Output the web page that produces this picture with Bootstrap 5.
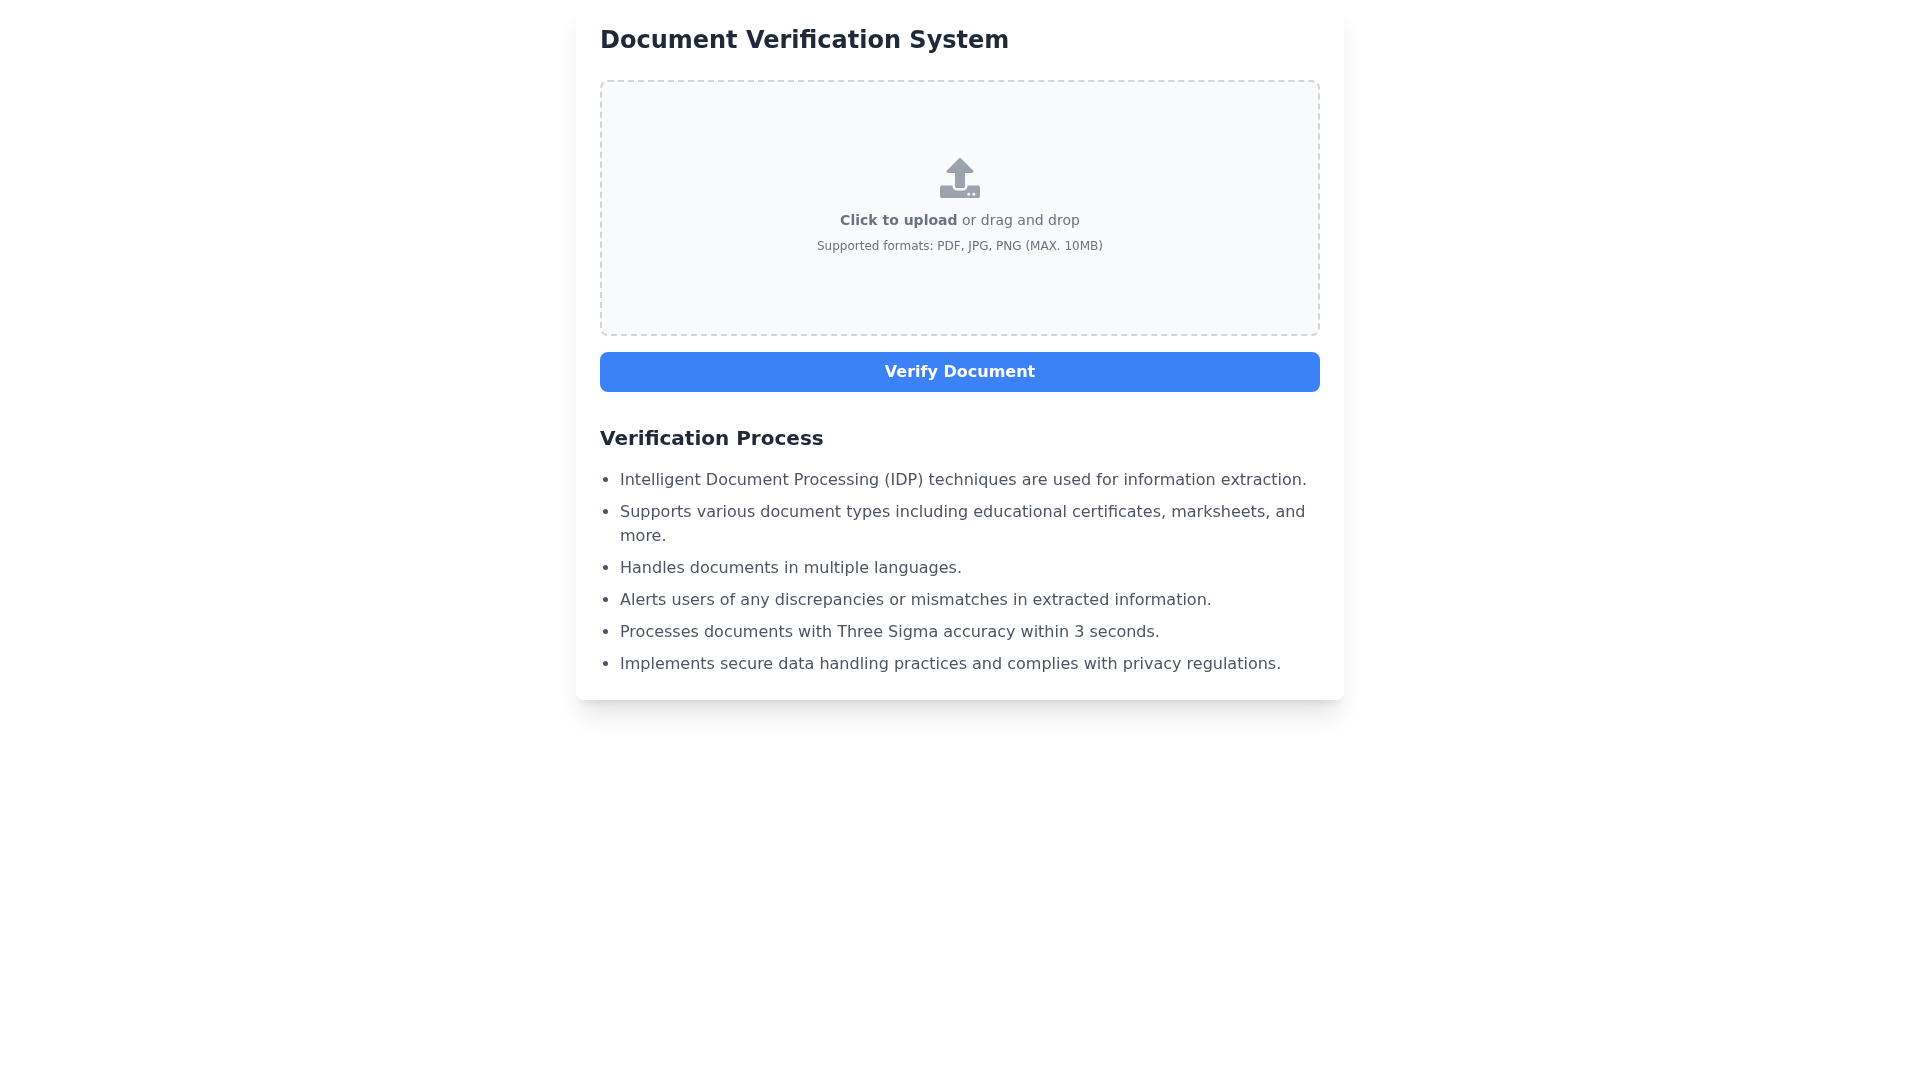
<!DOCTYPE html>
<html lang="en">
<head>
<meta charset="utf-8">
<title>Document Verification System</title>
<link href="https://cdn.jsdelivr.net/npm/bootstrap@5.3.0/dist/css/bootstrap.min.css" rel="stylesheet">
<style>
body { font-family: "DejaVu Sans", sans-serif; background: #fff; min-height: 100vh; }
.dv-card { width: 768px; min-height: 700px; border-radius: 8px; box-shadow: 0 20px 25px -5px rgba(0,0,0,.1), 0 8px 10px -6px rgba(0,0,0,.1); will-change: transform; }
.dv-title { font-size: 24px; line-height: 32px; font-weight: 700; color: #1f2937; margin-bottom: 24px; }
.dv-drop { height: 256px; background: #f9fafb; border: 2px dashed #d1d5db; border-radius: 8px; padding-bottom: 5px; }
.dv-icon { width: 40px; height: 40px; fill: #9ca3af; margin-bottom: 12px; }
.dv-main { font-size: 14px; line-height: 20px; color: #6b7280; margin-bottom: 8px; }
.dv-sub { font-size: 12px; line-height: 16px; color: #6b7280; }
.dv-btn { height: 40px; background: #3b82f6; border: 0; border-radius: 8px; color: #fff; font-size: 16px; font-weight: 700; margin-top: 16px; }
.dv-btn:hover { background: #3b82f6; color: #fff; }
.dv-h2 { font-size: 20px; line-height: 28px; font-weight: 700; color: #1f2937; margin-top: 32px; margin-bottom: 16px; }
.dv-list { padding-left: 20px; margin: 0; color: #4b5563; font-size: 16px; line-height: 24px; }
.dv-list li + li { margin-top: 8px; }
</style>
</head>
<body>
<main class="dv-card bg-white mx-auto p-4">
  <h1 class="dv-title">Document Verification System</h1>
  <div class="dv-drop d-flex flex-column align-items-center justify-content-center">
    <svg class="dv-icon" viewBox="0 0 512 512" aria-hidden="true"><path d="M296 384h-80c-13.3 0-24-10.7-24-24V192h-87.7c-17.8 0-26.7-21.5-14.1-34.1L242.3 5.7c7.5-7.5 19.8-7.5 27.3 0l152.2 152.2c12.6 12.6 3.7 34.1-14.1 34.1H320v168c0 13.3-10.7 24-24 24zm216-8v112c0 13.3-10.7 24-24 24H24c-13.3 0-24-10.7-24-24V376c0-13.3 10.7-24 24-24h136v8c0 30.9 25.1 56 56 56h80c30.9 0 56-25.1 56-56v-8h136c13.3 0 24 10.7 24 24zm-124 88c0-11-9-20-20-20s-20 9-20 20 9 20 20 20 20-9 20-20zm64 0c0-11-9-20-20-20s-20 9-20 20 9 20 20 20 20-9 20-20z"/></svg>
    <p class="dv-main"><strong>Click to upload</strong> or drag and drop</p>
    <p class="dv-sub mb-0">Supported formats: PDF, JPG, PNG (MAX. 10MB)</p>
  </div>
  <button type="button" class="btn dv-btn w-100 d-flex align-items-center justify-content-center">Verify Document</button>
  <h2 class="dv-h2">Verification Process</h2>
  <ul class="dv-list">
    <li>Intelligent Document Processing (IDP) techniques are used for information extraction.</li>
    <li>Supports various document types including educational certificates, marksheets, and more.</li>
    <li>Handles documents in multiple languages.</li>
    <li>Alerts users of any discrepancies or mismatches in extracted information.</li>
    <li>Processes documents with Three Sigma accuracy within 3 seconds.</li>
    <li>Implements secure data handling practices and complies with privacy regulations.</li>
  </ul>
</main>
<script src="https://cdn.jsdelivr.net/npm/bootstrap@5.3.0/dist/js/bootstrap.bundle.min.js"></script>
</body>
</html>
